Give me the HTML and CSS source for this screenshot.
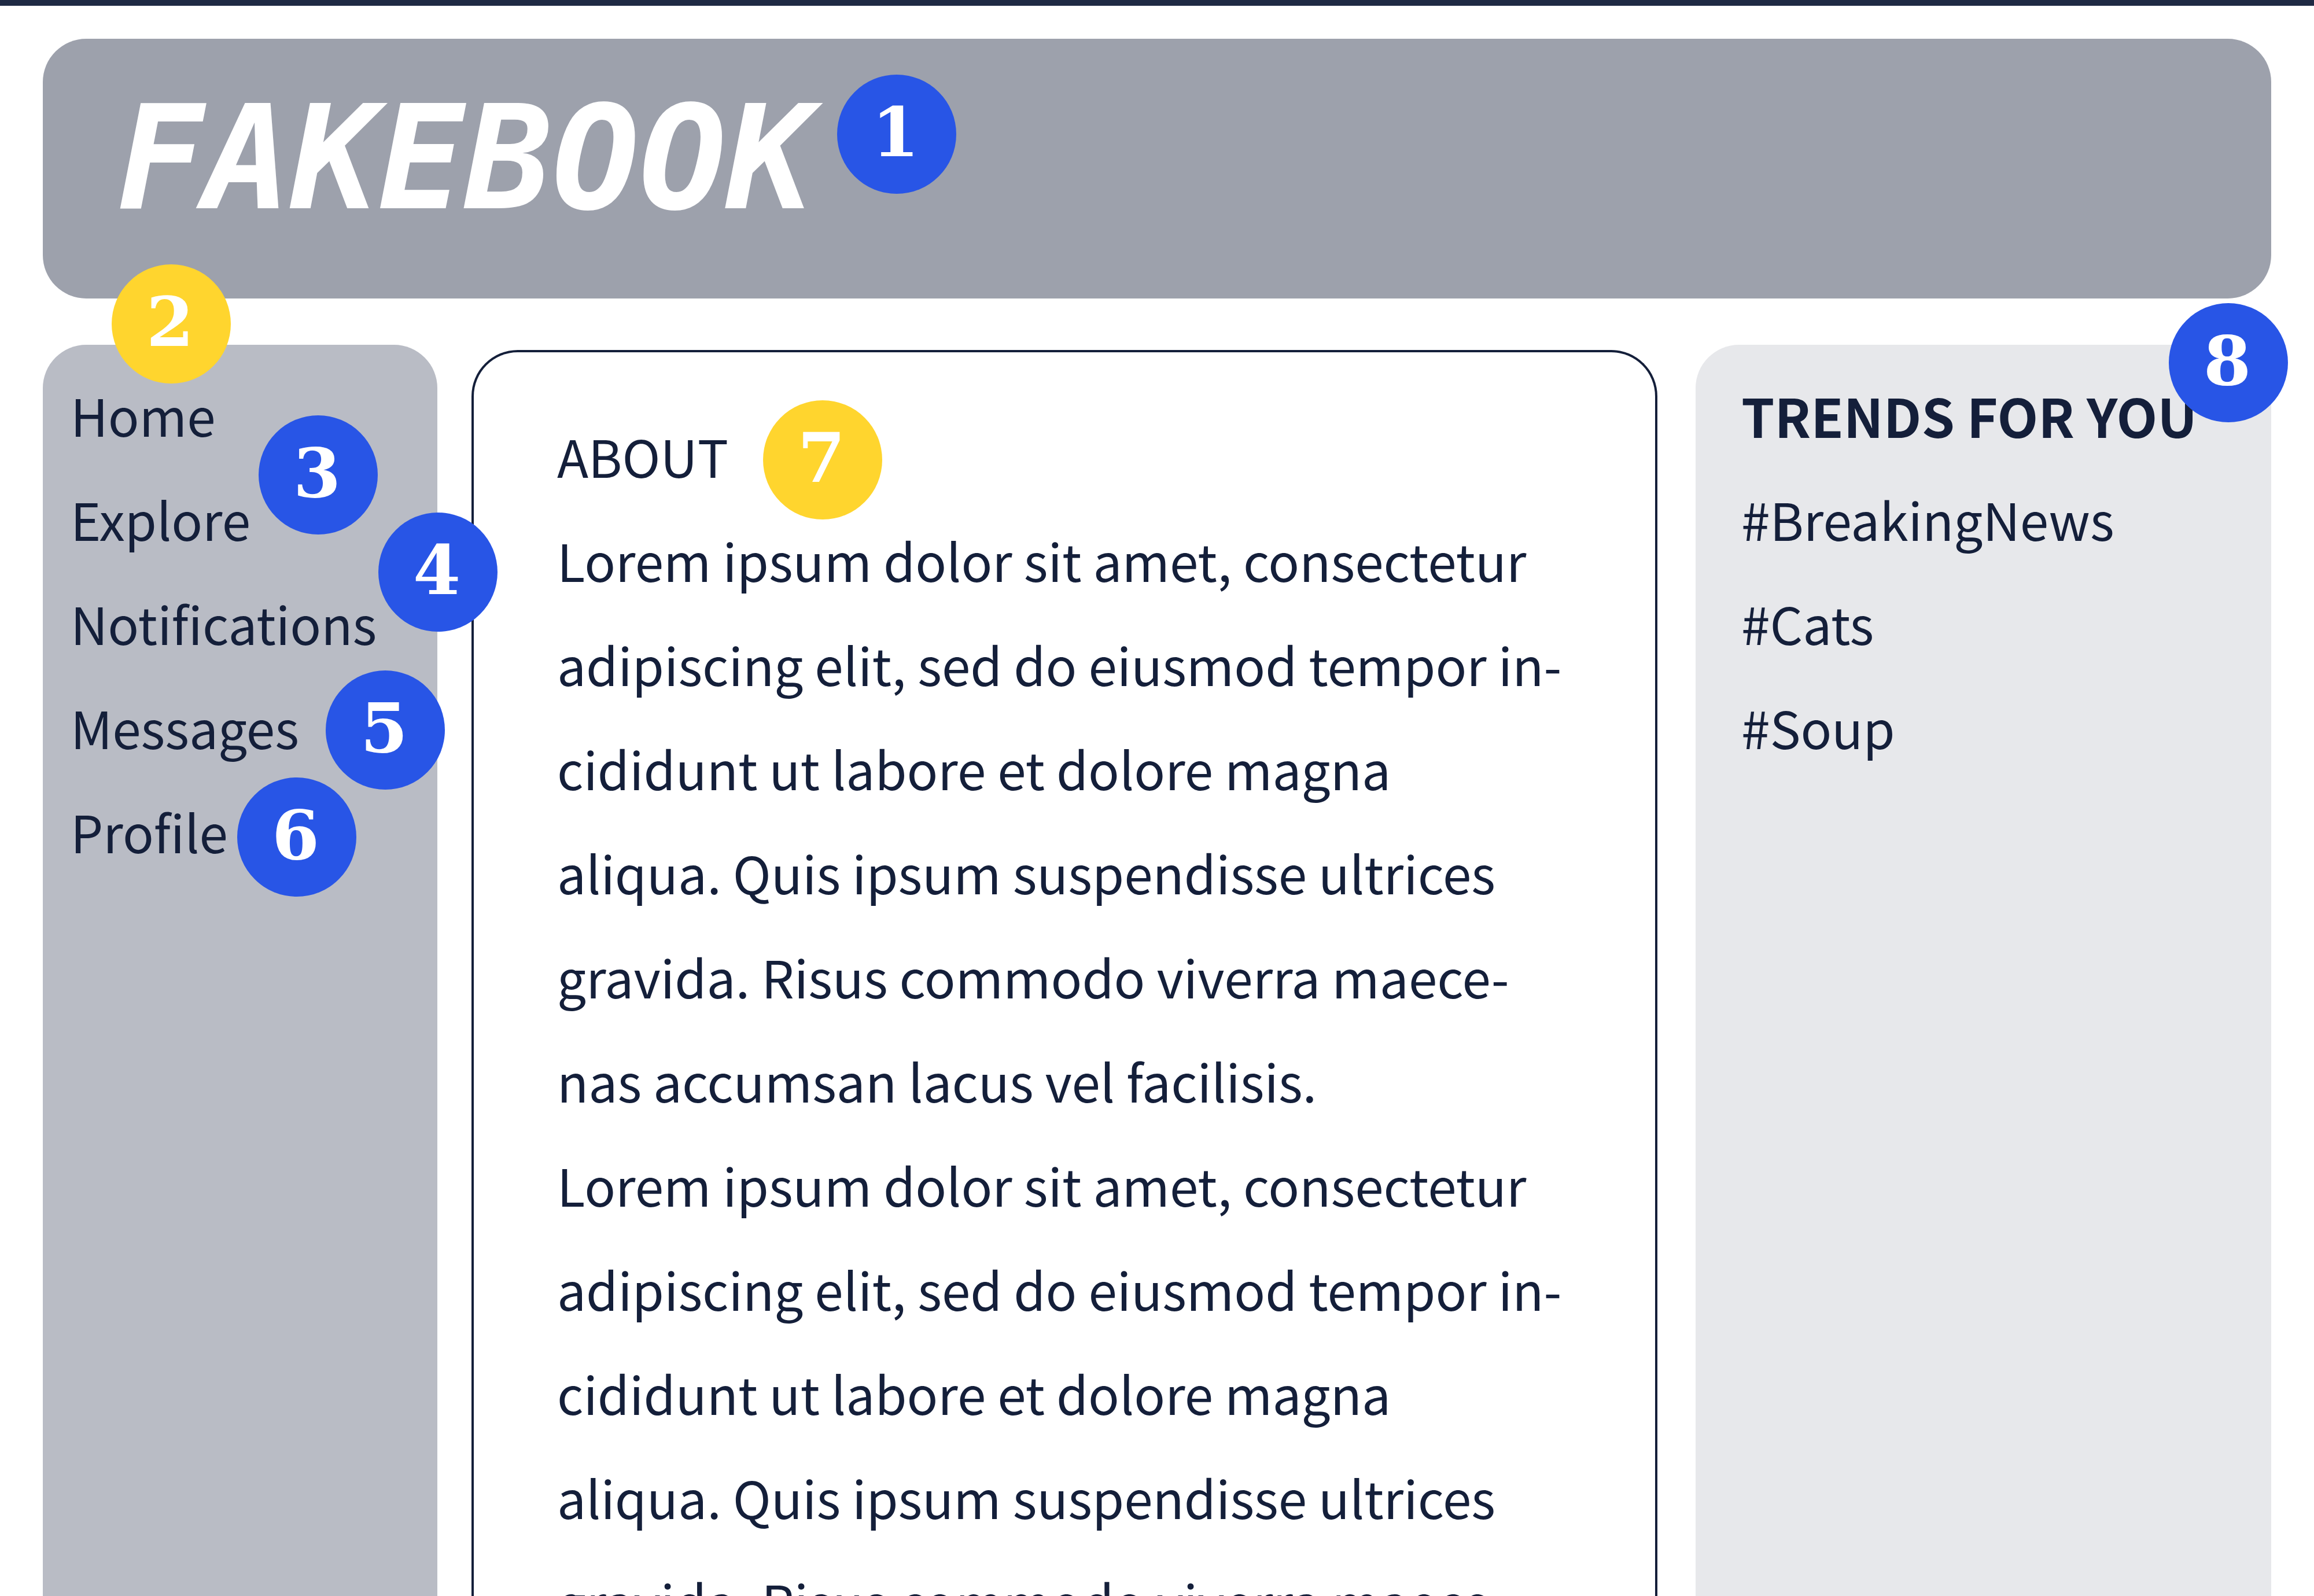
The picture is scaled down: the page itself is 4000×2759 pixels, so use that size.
FILE: index.html
```html
<!DOCTYPE html>
<html lang="en">
<head>
<meta charset="utf-8">
<title>Fakebook</title>
<link rel="stylesheet" href="styles.css">
</head>
<body>
<div class="page">
  <header class="banner">
    <h1 class="logo">FAKEBOOK</h1>
    <span class="badge blue badge-1">1</span>
  </header>
  <div class="columns">
    <nav class="panel side-nav">
      <ul class="list">
        <li><a href="#home">Home</a></li>
        <li><a href="#explore">Explore</a></li>
        <li><a href="#notifications">Notifications</a></li>
        <li><a href="#messages">Messages</a></li>
        <li><a href="#profile">Profile</a></li>
      </ul>
      <span class="badge yellow badge-2">2</span>
      <span class="badge blue badge-3">3</span>
      <span class="badge blue badge-4">4</span>
      <span class="badge blue badge-5">5</span>
      <span class="badge blue badge-6">6</span>
    </nav>
    <main class="about">
      <h2 class="about-title">ABOUT</h2>
      <p>Lorem ipsum dolor sit amet, consectetur<br>
        adipiscing elit, sed do eiusmod tempor in-<br>
        cididunt ut labore et dolore magna<br>
        aliqua. Quis ipsum suspendisse ultrices<br>
        gravida. Risus commodo viverra maece-<br>
        nas accumsan lacus vel facilisis.</p>
      <p>Lorem ipsum dolor sit amet, consectetur<br>
        adipiscing elit, sed do eiusmod tempor in-<br>
        cididunt ut labore et dolore magna<br>
        aliqua. Quis ipsum suspendisse ultrices<br>
        gravida. Risus commodo viverra maece-<br>
        nas accumsan lacus vel facilisis.</p>
      <span class="badge yellow badge-7">7</span>
    </main>
    <aside class="panel trends">
      <h2 class="trends-title">TRENDS FOR YOU</h2>
      <ul class="list">
        <li><a href="#breakingnews">#BreakingNews</a></li>
        <li><a href="#cats">#Cats</a></li>
        <li><a href="#soup">#Soup</a></li>
      </ul>
      <span class="badge blue badge-8">8</span>
    </aside>
  </div>
</div>
</body>
</html>
```
FILE: styles.css
```css
* {
  box-sizing: border-box;
}

body {
  margin: 0;
  background: #fff;
  color: #141f3a;
  font-family: "Noto Sans CJK SC", "Noto Sans", sans-serif;
  font-size: 89px;
  line-height: 180px;
}

h1,
h2,
p,
ul {
  margin: 0;
  padding: 0;
}

.page {
  display: flex;
  flex-direction: column;
  gap: 80px;
  height: 100vh;
  padding: 57px 74px 0;
  border-top: 10px solid #1f2a44;
  overflow: hidden;
}

.banner {
  position: relative;
  flex: none;
  padding: 57px 128px 92px;
  border-radius: 75px;
  background: #9da1ac;
}

.logo {
  color: #fff;
  font: italic bold 250px/300px "DejaVu Sans Mono", monospace;
}

.columns {
  display: grid;
  grid-template-columns: 682fr 2050fr 1002fr;
  column-gap: 59px;
  flex: 1;
  min-height: 0;
}

.panel {
  position: relative;
  border-radius: 75px 75px 0 0;
}

.side-nav {
  z-index: 1;
  padding: 31px 48px;
  background: #b9bcc5;
}

.list {
  list-style: none;
}

.list a {
  color: inherit;
  text-decoration: none;
}

.about {
  position: relative;
  margin-top: 9px;
  padding: 89px 144px 0;
  border: 4px solid #141f3a;
  border-bottom: 0;
  border-radius: 80px 80px 0 0;
  white-space: nowrap;
}

.about-title {
  font-size: 89px;
  font-weight: 400;
}

.trends {
  margin-left: 7px;
  padding: 31px 79px;
  background: #e7e8eb;
  white-space: nowrap;
}

.trends-title {
  font-size: 92px;
  font-weight: 700;
}

/* Numbered callouts laid over the panels */
.badge {
  position: absolute;
  width: 206px;
  height: 206px;
  padding-right: 4px;
  border-radius: 50%;
  color: #fff;
  font: bold 118px/200px "DejaVu Serif", serif;
  text-align: center;
}

.blue {
  background: #2855e6;
}

.yellow {
  background: #ffd52e;
}

.badge-1 {
  top: 62px;
  left: 1373px;
}

.badge-2 {
  top: -139px;
  left: 119px;
}

.badge-3 {
  top: 122px;
  left: 373px;
}

.badge-4 {
  top: 290px;
  left: 580px;
}

.badge-5 {
  top: 563px;
  left: 489px;
}

.badge-6 {
  top: 748px;
  left: 336px;
}

.badge-7 {
  top: 83px;
  left: 500px;
}

.badge-8 {
  top: -72px;
  right: -29px;
}
```
